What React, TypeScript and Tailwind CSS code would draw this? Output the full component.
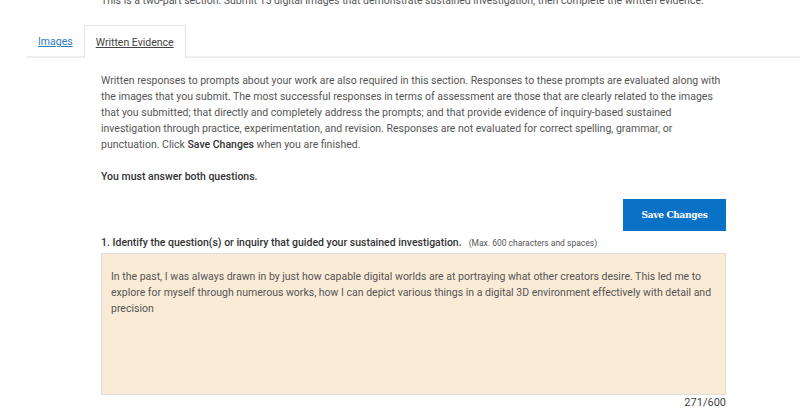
import React from "react";

const answer =
  "In the past, I was always drawn in by just how capable digital worlds are at portraying what other creators desire. This led me to explore for myself through numerous works, how I can depict various things in a digital 3D environment effectively with detail and precision";

const App: React.FC = () => {
  return (
    <div className="w-[800px] h-[413px] overflow-hidden bg-white font-['Roboto',sans-serif] text-[#444]">
      <p className="ml-[101px] -mt-[7px] text-[10.5px] leading-4 text-[#555]">
        This is a two-part section. Submit 15 digital images that demonstrate
        sustained investigation, then complete the written evidence.
      </p>

      {/* tabs */}
      <div className="ml-[27px] mt-[16px] flex h-[33px] border-b-2 border-[#eeeeee]">
        <a
          href="#"
          className="px-[11px] pt-[9px] text-[10.5px] text-[#2f7bbf] underline"
        >
          Images
        </a>
        <div className="-mb-[2px] border border-b-0 border-[#e3e3e3] bg-white px-[11px] pt-[9px] text-[10.5px] text-[#444] underline">
          Written Evidence
        </div>
      </div>

      <div className="ml-[101px] w-[625px] text-[10.5px] leading-4">
        <p className="mt-[15px] text-[#555]">
          Written responses to prompts about your work are also required in
          this section. Responses to these prompts are evaluated along with the
          images that you submit. The most successful responses in terms of
          assessment are those that are clearly related to the images that you
          submitted; that directly and completely address the prompts; and that
          provide evidence of inquiry-based sustained investigation through
          practice, experimentation, and revision. Responses are not evaluated
          for correct spelling, grammar, or punctuation. Click{" "}
          <span className="font-medium text-[#333]">Save Changes</span> when you
          are finished.
        </p>
        <p className="mt-[16px] font-medium text-[#333]">
          You must answer both questions.
        </p>

        <div className="mt-[14px] flex justify-end">
          <button className="h-[32px] w-[103px] bg-[#0a72c6] text-[9px] font-bold text-white font-['DejaVu_Serif',serif] tracking-[-0.3px]">
            Save Changes
          </button>
        </div>

        <div className="mt-[4px] flex h-4 items-baseline gap-[7px]">
          <span className="text-[10.5px] font-medium text-[#333]">
            1. Identify the question(s) or inquiry that guided your sustained
            investigation.
          </span>
          <span className="text-[8.5px] text-[#555]">
            (Max. 600 characters and spaces)
          </span>
        </div>

        <div className="mt-[2px] h-[142px] border border-[#dddddd] bg-[#faebd7] px-[9px] pt-[15px] text-[10.5px] leading-4 text-[#555]">
          {answer}
        </div>
        <div className="text-right text-[11px] text-[#444]">271/600</div>
      </div>
    </div>
  );
};

export default App;
